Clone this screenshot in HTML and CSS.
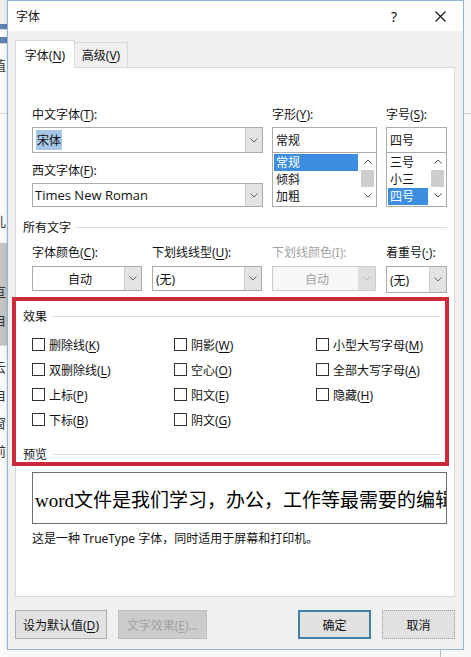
FILE: index.html
```html
<!DOCTYPE html>
<html lang="zh-CN">
<head>
    <meta charset="UTF-8">
    <title>字体</title>
    <link rel="stylesheet" href="styles.css">
</head>
<body>
<div class="screen">
    <div class="doc-left">
        <div class="dl-gap h24"></div>
        <div class="dl-bar h5"></div>
        <div class="dl-white h8"></div>
        <div class="dl-bar h6"></div>
        <div class="dl-white h70"><span class="peek">值</span></div>
        <div class="dl-white h130"><span class="peek low">儿</span></div>
        <div class="dl-gray h102"><span class="peek">，</span><span class="peek">亘</span><span class="peek">自</span></div>
        <div class="dl-white h312"><span class="peek">云</span><span class="peek">自</span><span class="peek">窗</span><span class="peek">前</span></div>
    </div>

    <div class="dialog-col">
        <div class="dialog">
            <div class="titlebar">
                <span class="title">字体</span>
                <span class="help">?</span>
                <span class="close">
                    <svg width="11" height="11" viewBox="0 0 11 11"><path d="M0.5 0.5 10.5 10.5M10.5 0.5 0.5 10.5" stroke="#111" stroke-width="1.1" fill="none"/></svg>
                </span>
            </div>

            <div class="dialog-body">
                <div class="tabs">
                    <div class="tab active"><span>字体(<u>N</u>)</span></div>
                    <div class="tab"><span>高级(<u>V</u>)</span></div>
                </div>

                <div class="panel">
                    <div class="font-pick">
                        <div class="col1">
                            <div class="lbl">中文字体(<u>T</u>):</div>
                            <div class="combo">
                                <div class="val"><span class="mark">宋体</span></div>
                                <div class="drop"><svg width="8" height="5" viewBox="0 0 8 5"><path d="M0.5 0.5 4 4 7.5 0.5" fill="none" stroke="#666"/></svg></div>
                            </div>
                            <div class="lbl second">西文字体(<u>F</u>):</div>
                            <div class="combo short">
                                <div class="val latin">Times New Roman</div>
                                <div class="drop"><svg width="8" height="5" viewBox="0 0 8 5"><path d="M0.5 0.5 4 4 7.5 0.5" fill="none" stroke="#666"/></svg></div>
                            </div>
                        </div>

                        <div class="col2">
                            <div class="lbl">字形(<u>Y</u>):</div>
                            <div class="field">常规</div>
                            <div class="list">
                                <div class="items">
                                    <div class="item sel">常规</div>
                                    <div class="item">倾斜</div>
                                    <div class="item">加粗</div>
                                </div>
                                <div class="scroll">
                                    <div class="arrow"><svg width="8" height="5" viewBox="0 0 8 5"><path d="M0.5 4.5 4 1 7.5 4.5" fill="none" stroke="#555"/></svg></div>
                                    <div class="thumb"></div>
                                    <div class="arrow"><svg width="8" height="5" viewBox="0 0 8 5"><path d="M0.5 0.5 4 4 7.5 0.5" fill="none" stroke="#555"/></svg></div>
                                </div>
                            </div>
                        </div>

                        <div class="col3">
                            <div class="lbl">字号(<u>S</u>):</div>
                            <div class="field">四号</div>
                            <div class="list">
                                <div class="items">
                                    <div class="item">三号</div>
                                    <div class="item">小三</div>
                                    <div class="item sel">四号</div>
                                </div>
                                <div class="scroll">
                                    <div class="arrow"><svg width="8" height="5" viewBox="0 0 8 5"><path d="M0.5 4.5 4 1 7.5 4.5" fill="none" stroke="#555"/></svg></div>
                                    <div class="thumb"></div>
                                    <div class="arrow"><svg width="8" height="5" viewBox="0 0 8 5"><path d="M0.5 0.5 4 4 7.5 0.5" fill="none" stroke="#555"/></svg></div>
                                </div>
                            </div>
                        </div>
                    </div>

                    <div class="group-title all">所有文字</div>

                    <div class="all-text">
                        <div class="c-color">
                            <div class="lbl">字体颜色(<u>C</u>):</div>
                            <div class="select">
                                <div class="val center">自动</div>
                                <div class="drop"><svg width="8" height="5" viewBox="0 0 8 5"><path d="M0.5 0.5 4 4 7.5 0.5" fill="none" stroke="#666"/></svg></div>
                            </div>
                        </div>
                        <div class="c-line">
                            <div class="lbl">下划线线型(<u>U</u>):</div>
                            <div class="select">
                                <div class="val">(无)</div>
                                <div class="drop"><svg width="8" height="5" viewBox="0 0 8 5"><path d="M0.5 0.5 4 4 7.5 0.5" fill="none" stroke="#666"/></svg></div>
                            </div>
                        </div>
                        <div class="c-linecolor off">
                            <div class="lbl">下划线颜色(I):</div>
                            <div class="select">
                                <div class="val center">自动</div>
                                <div class="drop"><svg width="8" height="5" viewBox="0 0 8 5"><path d="M0.5 0.5 4 4 7.5 0.5" fill="none" stroke="#bbb"/></svg></div>
                            </div>
                        </div>
                        <div class="c-dot">
                            <div class="lbl">着重号(<u>·</u>):</div>
                            <div class="select tall">
                                <div class="val">(无)</div>
                                <div class="drop"><svg width="8" height="5" viewBox="0 0 8 5"><path d="M0.5 0.5 4 4 7.5 0.5" fill="none" stroke="#666"/></svg></div>
                            </div>
                        </div>
                    </div>

                    <div class="highlight">
                        <div class="group-title">效果</div>
                        <div class="fx-grid">
                            <div class="check"><span class="box"></span><span>删除线(<u>K</u>)</span></div>
                            <div class="check"><span class="box"></span><span>阴影(<u>W</u>)</span></div>
                            <div class="check"><span class="box"></span><span>小型大写字母(<u>M</u>)</span></div>
                            <div class="check"><span class="box"></span><span>双删除线(<u>L</u>)</span></div>
                            <div class="check"><span class="box"></span><span>空心(<u>O</u>)</span></div>
                            <div class="check"><span class="box"></span><span>全部大写字母(<u>A</u>)</span></div>
                            <div class="check"><span class="box"></span><span>上标(<u>P</u>)</span></div>
                            <div class="check"><span class="box"></span><span>阳文(<u>E</u>)</span></div>
                            <div class="check"><span class="box"></span><span>隐藏(<u>H</u>)</span></div>
                            <div class="check"><span class="box"></span><span>下标(<u>B</u>)</span></div>
                            <div class="check"><span class="box"></span><span>阴文(<u>G</u>)</span></div>
                        </div>
                        <div class="group-title preview-title">预览</div>
                    </div>

                    <div class="preview">word文件是我们学习，办公，工作等最需要的编辑工具</div>
                    <div class="note">这是一种 TrueType 字体，同时适用于屏幕和打印机。</div>
                </div>

                <div class="buttons">
                    <div class="button w92"><span>设为默认值(<u>D</u>)</span></div>
                    <div class="button w89 disabled"><span>文字效果(<u>E</u>)...</span></div>
                    <div class="spacer"></div>
                    <div class="button w73 default">确定</div>
                    <div class="button w73 cancel">取消</div>
                </div>
            </div>
        </div>
        <div class="doc-bottom"><div class="edge"></div></div>
    </div>

    <div class="doc-right"><div class="rule"></div></div>
</div>
</body>
</html>
```

FILE: styles.css
```css
* {
    box-sizing: border-box;
}

body {
    margin: 0;
    width: 471px;
    height: 657px;
    overflow: hidden;
    background: #f4f4f4;
    font-family: "Noto Sans", "Noto Sans CJK SC", sans-serif;
    font-size: 12px;
    color: #111;
}

u {
    text-decoration-thickness: 1px;
    text-underline-offset: 2px;
}

.screen {
    display: flex;
    height: 657px;
}

/* document behind the dialog */
.doc-left {
    width: 7px;
    flex: none;
    display: flex;
    flex-direction: column;
    overflow: hidden;
    font-size: 13px;
}

.dl-gap { background: #eeeeee; }
.dl-bar { background: #5a82b4; }
.dl-white { background: #fbfbfb; border-top: 1px solid #d8d8d8; }
.dl-gray { background: #c4c4c4; }

.h5 { height: 5px; }
.h6 { height: 6px; }
.h8 { height: 8px; }
.h24 { height: 24px; }
.h70 { height: 70px; }
.h102 { height: 102px; }
.h130 { height: 130px; }
.h312 { height: 312px; }

.peek {
    display: block;
    margin-left: -7px;
    margin-top: 14px;
    line-height: 14px;
    color: #333;
}

.peek.low {
    margin-top: 100px;
}

.dialog-col {
    width: 457px;
    flex: none;
    display: flex;
    flex-direction: column;
}

.dialog {
    height: 650px;
    background: #f0f0f0;
    border: 1px solid #8db6da;
    box-shadow: 1px 1px 4px rgba(0, 0, 0, 0.25);
    display: flex;
    flex-direction: column;
}

.doc-bottom {
    flex: 1;
    background: #f7f7f7;
}

.doc-bottom .edge {
    width: 434px;
    height: 100%;
    border-right: 1px solid #bdbdbd;
}

.doc-right {
    flex: 1;
    background: #f6f6f6;
}

.doc-right .rule {
    height: 114px;
    border-bottom: 1px solid #d2d2d2;
}

/* title bar */
.titlebar {
    height: 30px;
    flex: none;
    background: #ffffff;
    display: flex;
    align-items: center;
}

.title {
    flex: 1;
    padding-left: 8px;
}

.help,
.close {
    width: 46px;
    display: flex;
    justify-content: center;
    align-items: center;
}

.help {
    font-size: 14px;
}

.dialog-body {
    flex: 1;
    display: flex;
    flex-direction: column;
    padding: 9px 8px 10px 7px;
}

/* tabs */
.tabs {
    display: flex;
    align-items: flex-end;
    height: 27px;
    position: relative;
    z-index: 1;
}

.tab {
    width: 54px;
    height: 25px;
    border: 1px solid #d9d9d9;
    border-bottom: none;
    background: #f0f0f0;
    display: flex;
    align-items: center;
    justify-content: center;
    margin-left: -1px;
}

.tab.active {
    width: 60px;
    height: 28px;
    margin-left: 0;
    margin-bottom: -1px;
    background: #ffffff;
    position: relative;
    z-index: 2;
}

.panel {
    height: 530px;
    background: #ffffff;
    border: 1px solid #d9d9d9;
}

/* font pickers */
.font-pick {
    display: flex;
    gap: 9px;
    padding: 39px 0 0 16px;
}

.col1 { width: 231px; }
.col2 { width: 105px; }
.col3 { width: 61px; }

.lbl {
    height: 16px;
    line-height: 16px;
    margin-bottom: 4px;
    white-space: nowrap;
}

.lbl.second {
    margin-top: 10px;
}

.combo,
.select {
    display: flex;
    height: 26px;
    border: 1px solid #ababab;
    background: #ffffff;
}

.combo.short {
    height: 24px;
}

.val {
    flex: 1;
    display: flex;
    align-items: center;
    padding-left: 3px;
    white-space: nowrap;
}

.val.center {
    justify-content: center;
}

.val.latin {
    font-family: "Open Sans", sans-serif;
    font-size: 13px;
    padding-left: 2px;
}

.mark {
    background: #a6c6e6;
    padding: 1px 1px;
}

.drop {
    width: 17px;
    background: #e3e3e3;
    border-left: 1px solid #cdcdcd;
    display: flex;
    align-items: center;
    justify-content: center;
}

.field {
    height: 26px;
    border: 1px solid #ababab;
    padding-left: 3px;
    display: flex;
    align-items: center;
}

.list {
    height: 55px;
    margin-top: -1px;
    border: 1px solid #ababab;
    display: flex;
}

.items {
    flex: 1;
    padding: 1px;
}

.item {
    height: 17px;
    line-height: 17px;
    padding-left: 2px;
}

.item.sel {
    background: #3b8de0;
    color: #ffffff;
}

.scroll {
    width: 17px;
    display: flex;
    flex-direction: column;
    align-items: center;
}

.arrow {
    height: 17px;
    display: flex;
    align-items: center;
    justify-content: center;
}

.thumb {
    width: 13px;
    height: 17px;
    background: #cdcdcd;
}

/* section headings */
.group-title {
    display: flex;
    align-items: center;
    height: 16px;
    padding-left: 7px;
    padding-right: 7px;
    white-space: nowrap;
}

.group-title::after {
    content: "";
    flex: 1;
    height: 1px;
    background: #dcdcdc;
    margin-left: 6px;
}

.group-title.all {
    margin-top: 12px;
}

.all-text {
    display: flex;
    gap: 10px;
    padding-left: 16px;
    margin-top: 10px;
}

.all-text .lbl {
    margin-bottom: 5px;
}

.c-color,
.c-line { width: 110px; }
.c-linecolor { width: 104px; }
.c-dot { width: 61px; }

.select {
    height: 25px;
}

.select.tall {
    height: 27px;
}

.off .lbl,
.off .val {
    color: #a3a3a3;
}

.off .select {
    border-color: #cccccc;
    background: #f7f7f7;
}

.off .drop {
    background: #dedede;
    border-left-color: #dedede;
}

/* red frame round the effects */
.highlight {
    margin: 4px 5px 0 -4px;
    border: 4px solid #cc2a38;
    padding: 7px 0 0 0;
}

.highlight .group-title {
    padding-right: 5px;
}

.fx-grid {
    display: grid;
    grid-template-columns: 142px 142px 1fr;
    grid-auto-rows: 25px;
    margin-top: 8px;
    padding-left: 16px;
}

.check {
    display: flex;
    align-items: center;
    gap: 4px;
    white-space: nowrap;
}

.box {
    width: 13px;
    height: 13px;
    border: 1px solid #333333;
    background: #ffffff;
}

.preview-title {
    margin-top: 14px;
}

.preview {
    margin: 6px 7px 0 16px;
    height: 52px;
    border: 1px solid #6e6e6e;
    padding-left: 2px;
    display: flex;
    align-items: center;
    white-space: nowrap;
    overflow: hidden;
    font-family: "Liberation Serif", "Noto Sans CJK SC", serif;
    font-size: 19px;
    color: #000;
}

.note {
    margin-top: 7px;
    padding-left: 16px;
    height: 16px;
    line-height: 16px;
}

/* bottom buttons */
.buttons {
    display: flex;
    gap: 11px;
    height: 29px;
    margin-top: 13px;
}

.spacer {
    flex: 1;
}

.button {
    height: 29px;
    background: #e1e1e1;
    border: 1px solid #adadad;
    display: flex;
    align-items: center;
    justify-content: center;
    white-space: nowrap;
}

.w92 { width: 92px; }
.w89 { width: 89px; }
.w73 { width: 73px; }

.button.disabled {
    background: #cccccc;
    border-color: #bfbfbf;
    color: #a2a2a2;
}

.button.default {
    border: 2px solid #3f7fae;
}

.button.cancel {
    border: 1px dotted #9a9a9a;
}
```
